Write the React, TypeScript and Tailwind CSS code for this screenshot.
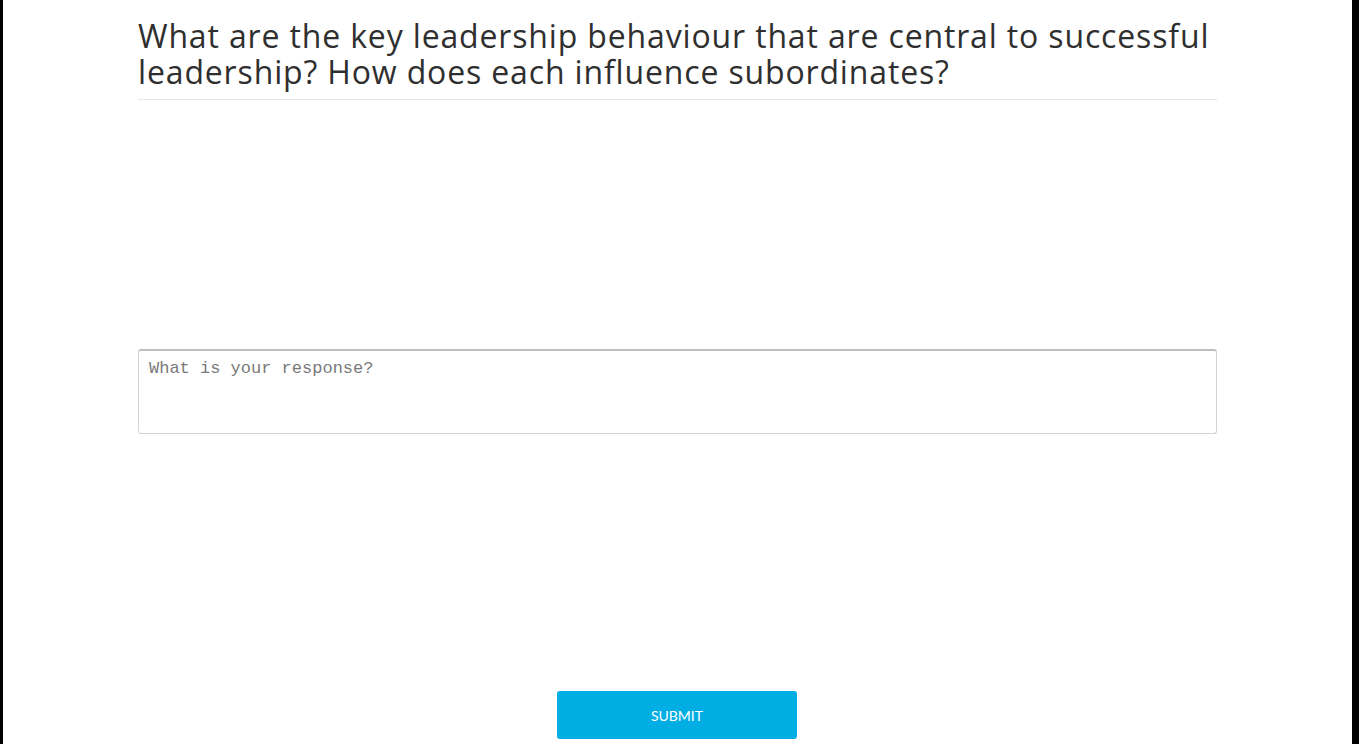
export default function App() {
  return (
    <div className="h-[744px] w-full bg-black overflow-hidden">
      <div className="ml-[3px] mr-[7px] h-full bg-white flex flex-col items-center">
        <div className="w-[1079px] flex flex-col">
          <h1
            className="pt-[18px] pb-[9px] text-[32px] leading-[36px] tracking-[0.85px] text-[#2f2f2f] border-b border-[#e6e6e6]"
            style={{ fontFamily: '"Open Sans", sans-serif' }}
          >
            What are the key leadership behaviour that are central to successful leadership? How does each influence subordinates?
          </h1>
          <textarea
            placeholder="What is your response?"
            className="mt-[249px] h-[85px] w-full resize-none rounded-[3px] border border-[#d2d2d2] border-t-[#bdbdbd] border-t-2 px-[10px] py-[8px] text-[17px] leading-[20px] placeholder:text-[#7a7a7a] outline-none"
            style={{ fontFamily: '"Liberation Mono", "Courier New", monospace' }}
          />
        </div>
        <button
          className="mt-[257px] -ml-[1px] h-[48px] w-[240px] rounded-[3px] bg-[#00aee3] text-[14px] text-white"
          style={{ fontFamily: 'Lato, "Open Sans", sans-serif' }}
        >
          SUBMIT
        </button>
      </div>
    </div>
  )
}
